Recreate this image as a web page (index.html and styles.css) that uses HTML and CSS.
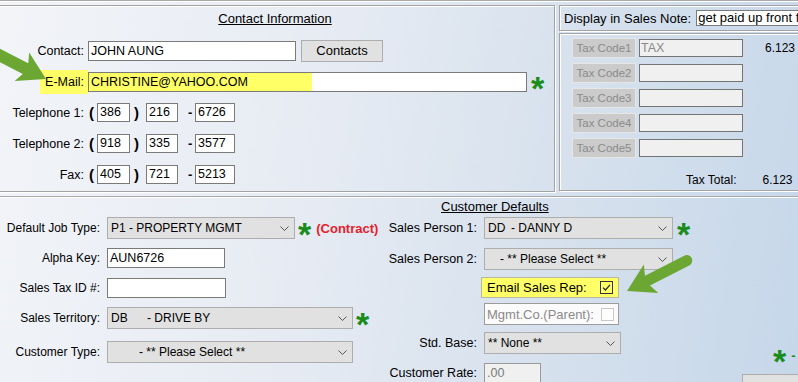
FILE: index.html
```html
<!DOCTYPE html>
<html lang="en">
<head>
<meta charset="utf-8">
<title>Customer</title>
<link rel="stylesheet" href="styles.css">
</head>
<body>
<div class="page">
  <div class="topline"></div>
  <div class="top">
    <section class="panel contact">
      <div class="heading"><span class="u">Contact Information</span></div>
      <div class="row">
        <span class="lbl">Contact:</span>
        <div class="field f-contact">JOHN AUNG</div>
        <button class="btn btn-contacts">Contacts</button>
      </div>
      <div class="row">
        <span class="lbl"><span class="hl-label">E-Mail:</span></span>
        <div class="field f-email"><span class="hl-text">CHRISTINE@YAHOO.COM</span></div>
        <span class="req req-email">*</span>
      </div>
      <div class="row">
        <span class="lbl">Telephone 1:</span>
        <span class="paren">(</span>
        <div class="field ph f-area">386</div>
        <span class="paren close">)</span>
        <div class="field ph f-pre">216</div>
        <span class="dash">-</span>
        <div class="field ph f-num">6726</div>
      </div>
      <div class="row">
        <span class="lbl">Telephone 2:</span>
        <span class="paren">(</span>
        <div class="field ph f-area">918</div>
        <span class="paren close">)</span>
        <div class="field ph f-pre">335</div>
        <span class="dash">-</span>
        <div class="field ph f-num">3577</div>
      </div>
      <div class="row">
        <span class="lbl">Fax:</span>
        <span class="paren">(</span>
        <div class="field ph f-area">405</div>
        <span class="paren close">)</span>
        <div class="field ph f-pre">721</div>
        <span class="dash">-</span>
        <div class="field ph f-num">5213</div>
      </div>
    </section>
    <div class="rightcol">
      <div class="panel note">
        <span>Display in Sales Note:</span>
        <div class="field note-field">get paid up front first</div>
      </div>
      <div class="panel tax">
        <div class="taxrow"><span class="taxbtn">Tax Code1</span><div class="taxin">TAX</div><span class="taxval">6.123</span></div>
        <div class="taxrow"><span class="taxbtn">Tax Code2</span><div class="taxin"></div></div>
        <div class="taxrow"><span class="taxbtn">Tax Code3</span><div class="taxin"></div></div>
        <div class="taxrow"><span class="taxbtn">Tax Code4</span><div class="taxin"></div></div>
        <div class="taxrow"><span class="taxbtn">Tax Code5</span><div class="taxin"></div></div>
        <div class="taxtotal"><span>Tax Total:</span><span class="taxtotal-val">6.123</span></div>
      </div>
    </div>
  </div>

  <div class="bottom">
    <div class="col-left">
      <div class="brow r-job">
        <span class="blbl">Default Job Type:</span>
        <div class="select sel-job"><span>P1 - PROPERTY MGMT</span><svg class="chev" width="9" height="5" viewBox="0 0 9 5"><polyline points="0.5,0.5 4.5,4.5 8.5,0.5" fill="none" stroke="#555" stroke-width="1"/></svg></div>
        <span class="req req-job">*</span>
        <span class="contract">(Contract)</span>
      </div>
      <div class="brow r-alpha">
        <span class="blbl">Alpha Key:</span>
        <div class="field f-alpha">AUN6726</div>
      </div>
      <div class="brow r-taxid">
        <span class="blbl">Sales Tax ID #:</span>
        <div class="field f-taxid"></div>
      </div>
      <div class="brow r-terr">
        <span class="blbl">Sales Territory:</span>
        <div class="select sel-wide"><span><span class="code">DB</span>- DRIVE BY</span><svg class="chev" width="9" height="5" viewBox="0 0 9 5"><polyline points="0.5,0.5 4.5,4.5 8.5,0.5" fill="none" stroke="#555" stroke-width="1"/></svg></div>
        <span class="req req-terr">*</span>
      </div>
      <div class="brow r-ctype">
        <span class="blbl">Customer Type:</span>
        <div class="select sel-wide sel-indent"><span>- ** Please Select **</span><svg class="chev" width="9" height="5" viewBox="0 0 9 5"><polyline points="0.5,0.5 4.5,4.5 8.5,0.5" fill="none" stroke="#555" stroke-width="1"/></svg></div>
      </div>
    </div>

    <div class="col-right">
      <div class="cd-heading"><span class="u">Customer Defaults</span></div>
      <div class="brow r-sp1">
        <span class="rlbl">Sales Person 1:</span>
        <div class="select sel-sp"><span><span class="code2">DD</span>- DANNY D</span><svg class="chev" width="9" height="5" viewBox="0 0 9 5"><polyline points="0.5,0.5 4.5,4.5 8.5,0.5" fill="none" stroke="#555" stroke-width="1"/></svg></div>
        <span class="req req-sp">*</span>
      </div>
      <div class="brow r-sp2">
        <span class="rlbl">Sales Person 2:</span>
        <div class="select sel-sp sel-indent2"><span>- ** Please Select **</span><svg class="chev" width="9" height="5" viewBox="0 0 9 5"><polyline points="0.5,0.5 4.5,4.5 8.5,0.5" fill="none" stroke="#555" stroke-width="1"/></svg></div>
      </div>
      <div class="brow r-email">
        <span class="rlbl"></span>
        <div class="chkbox emailrep">
          <span>Email Sales Rep:</span>
          <span class="cb cb-on"><svg width="11" height="11" viewBox="0 0 11 11"><path d="M2 5.6 L4.4 8 L9 2.8" fill="none" stroke="#222" stroke-width="1.2"/></svg></span>
        </div>
      </div>
      <div class="brow r-mgmt">
        <span class="rlbl"></span>
        <div class="chkbox mgmt">
          <span>Mgmt.Co.(Parent):</span>
          <span class="cb cb-off"></span>
        </div>
      </div>
      <div class="brow r-std">
        <span class="rlbl">Std. Base:</span>
        <div class="select sel-std"><span>** None **</span><svg class="chev" width="9" height="5" viewBox="0 0 9 5"><polyline points="0.5,0.5 4.5,4.5 8.5,0.5" fill="none" stroke="#555" stroke-width="1"/></svg></div>
      </div>
      <div class="brow r-rate">
        <span class="rlbl">Customer Rate:</span>
        <div class="field f-rate">.00</div>
      </div>
    </div>

    <div class="col-extra">
      <div class="legend"><span class="req">*</span><span class="legend-dash">-</span></div>
      <button class="btn btn-save">Save</button>
    </div>
  </div>

  <svg class="overlay" width="798" height="382" viewBox="0 0 798 382">
    <g transform="translate(46,79) rotate(27)" fill="#6ca733">
      <path d="M0 0 L-27 -16 L-23 -6 L-100 -6 L-100 6 L-23 6 L-27 16 Z"/>
    </g>
    <g transform="translate(627,291) rotate(153)" fill="#6ca733">
      <path d="M0 0 L-27 -16 L-23 -5.5 L-67 -5.5 A5.5 5.5 0 0 0 -67 5.5 L-23 5.5 L-27 16 Z"/>
    </g>
  </svg>
</div>
</body>
</html>
```

FILE: styles.css
```css
* { box-sizing: border-box; }
html, body { margin: 0; padding: 0; }
body {
  width: 798px;
  height: 382px;
  overflow: hidden;
  font-family: "Liberation Sans", Arial, sans-serif;
  font-size: 12px;
  color: #000;
  background: linear-gradient(100deg, #f2f4f8 0%, #e6ebf3 40%, #d3dfec 75%, #c6d7ea 100%);
}
.page {
  position: relative;
  width: 798px;
  height: 382px;
  overflow: hidden;
}
.u { text-decoration: underline; }

.topline {
  height: 2px;
  border-top: 1px solid #a9a9a9;
  border-bottom: 1px solid #ffffff;
}
.top {
  display: flex;
  gap: 4px;
  padding-top: 3px;
  height: 190px;
}
.panel {
  border: 1px solid #a3a3a3;
  box-shadow: inset 1px 1px 0 #ffffff, 1px 1px 0 #ffffff;
}
.contact {
  width: 557px;
  height: 187px;
  margin-left: -2px;
  flex: none;
}
.heading {
  height: 29px;
  padding-top: 5px;
  line-height: 15px;
  text-align: center;
  font-size: 13px;
  padding-right: 3px;
}
.row {
  display: flex;
  align-items: center;
  height: 31px;
}
.lbl {
  width: 89px;
  flex: none;
  text-align: right;
  padding-right: 4px;
  font-size: 12.5px;
  white-space: nowrap;
}
.field {
  background: #ffffff;
  border: 1px solid #7a7a7a;
  font-size: 12.5px;
  line-height: 18px;
  height: 20px;
  padding-left: 2px;
  white-space: nowrap;
  overflow: hidden;
  flex: none;
}
.f-contact { width: 208px; }
.btn {
  font-family: "Liberation Sans", Arial, sans-serif;
  font-size: 13px;
  background: #e1e1e1;
  border: 1px solid #adadad;
  color: #000;
  padding: 0;
  flex: none;
}
.btn-contacts {
  width: 82px;
  height: 22px;
  margin-left: 5px;
}
.hl-label {
  display: inline-block;
  background: #ffff66;
  height: 24px;
  line-height: 24px;
  padding: 0 4px 0 5px;
  margin-right: -4px;
}
.f-email {
  width: 439px;
  padding-left: 0;
  padding-top: 0;
}
.hl-text {
  display: inline-block;
  width: 223px;
  height: 18px;
  background: #ffff66;
  padding-left: 2px;
}
.req {
  display: inline-block;
  flex: none;
  color: #1a8c1a;
  font-weight: bold;
  font-size: 34px;
  line-height: 22px;
  height: 22px;
  padding-top: 6px;
  overflow: visible;
}
.req-email { margin-left: 4px; }

.paren {
  font-weight: bold;
  font-size: 15px;
  margin-left: 1px;
  width: 5px;
  flex: none;
}
.paren.close { margin-left: 4px; }
.ph {
  height: 19px;
  line-height: 17px;
}
.f-area { width: 33px; margin-left: 3px; }
.f-pre { width: 32px; margin-left: 7px; }
.dash {
  font-weight: bold;
  font-size: 13px;
  margin-left: 10px;
  width: 5px;
  flex: none;
}
.f-num { width: 40px; margin-left: 2px; }

.rightcol {
  width: 262px;
  flex: none;
  display: flex;
  flex-direction: column;
  gap: 2px;
}
.note {
  height: 26px;
  display: flex;
  align-items: center;
  padding-left: 4px;
  font-size: 13px;
  white-space: nowrap;
}
.note-field {
  margin-left: 5px;
  width: 200px;
  height: 16px;
  line-height: 14px;
  font-size: 13px;
  padding-left: 1px;
}
.tax {
  height: 158px;
  padding: 4px 0 0 12px;
}
.taxrow {
  display: flex;
  align-items: center;
  height: 25px;
  padding-bottom: 5px;
}
.taxbtn {
  width: 64px;
  height: 20px;
  background: #cbcbcb;
  border: 1px solid #e6e6e6;
  color: #8a8a8a;
  font-size: 11.5px;
  line-height: 18px;
  text-align: center;
  flex: none;
}
.taxin {
  width: 104px;
  height: 18px;
  margin-left: 3px;
  background: #f0f0f0;
  border: 1px solid #747474;
  color: #8a8a8a;
  font-size: 12.5px;
  line-height: 16px;
  padding-left: 1px;
  flex: none;
}
.taxval {
  margin-left: 22px;
  font-size: 12px;
}
.taxtotal {
  display: flex;
  align-items: center;
  height: 20px;
  margin-top: 7px;
  padding-left: 114px;
  font-size: 12px;
}
.taxtotal-val { margin-left: 26px; }

.bottom {
  margin-top: 4px;
  border-top: 1px solid #a9a9a9;
  box-shadow: inset 0 1px 0 #ffffff;
  display: grid;
  grid-template-columns: 380px 300px 118px;
  height: 186px;
}
.col-left { padding-top: 20px; }
.cd-heading {
  height: 20px;
  line-height: 20px;
  font-size: 13px;
  padding-left: 61px;
}
.brow {
  display: flex;
  align-items: center;
  height: 22px;
}
.blbl {
  width: 107px;
  flex: none;
  text-align: right;
  padding-right: 7px;
  font-size: 12px;
  white-space: nowrap;
}
.rlbl {
  width: 104px;
  flex: none;
  text-align: right;
  padding-right: 7px;
  font-size: 12.5px;
  white-space: nowrap;
}
.select {
  display: flex;
  align-items: center;
  justify-content: space-between;
  height: 22px;
  background: #e1e1e1;
  border: 1px solid #adadad;
  padding: 0 5px 0 3px;
  font-size: 12px;
  white-space: nowrap;
  flex: none;
}
.chev { flex: none; }
.sel-job { width: 188px; }
.sel-wide { width: 246px; }
.sel-indent { padding-left: 31px; }
.sel-sp { width: 189px; }
.sel-indent2 { padding-left: 15px; }
.sel-std { width: 137px; }
.code { display: inline-block; width: 36px; }
.code2 { display: inline-block; width: 23px; }

.req-job { margin-left: 3px; }
.req-terr { margin-left: 3px; }
.req-sp { margin-left: 4px; }
.contract {
  color: #e8202a;
  font-weight: bold;
  font-size: 13px;
  margin-left: 5px;
}

.r-job { margin-bottom: 9px; }
.r-alpha { height: 20px; margin-bottom: 10px; }
.f-alpha { width: 118px; }
.r-taxid { height: 20px; margin-bottom: 9px; }
.f-taxid { width: 119px; }
.r-terr { margin-bottom: 12px; }

.r-sp1 { margin-bottom: 9px; }
.r-sp2 { margin-bottom: 7px; }
.r-email { height: 21px; margin-bottom: 5px; }
.r-mgmt { margin-bottom: 7px; }
.r-std { margin-bottom: 9px; }
.r-rate { height: 20px; }

.chkbox {
  display: flex;
  align-items: center;
  justify-content: space-between;
  font-size: 13px;
  flex: none;
}
.emailrep {
  width: 138px;
  height: 21px;
  margin-left: -3px;
  background: #ffff66;
  border: 1px solid #b8b8a0;
  padding: 0 5px 0 5px;
}
.mgmt {
  width: 135px;
  height: 22px;
  background: #fbfbfb;
  border: 1px solid #9c9c9c;
  padding: 0 4px 0 2px;
  color: #8a8a8a;
}
.cb {
  width: 13px;
  height: 13px;
  display: flex;
  align-items: center;
  justify-content: center;
  flex: none;
}
.cb-on { border: 1px solid #333333; }
.cb-off { border: 1px solid #c8c8c8; background: #ffffff; }
.f-rate {
  width: 57px;
  background: #f0f0f0;
  border-color: #9a9a9a;
  color: #7a7a7a;
}

.col-extra {
  padding-top: 147px;
}
.legend {
  display: flex;
  align-items: center;
  height: 22px;
  padding-left: 93px;
}
.legend-dash {
  color: #1a8c1a;
  font-weight: bold;
  font-size: 13px;
  margin-left: 5px;
}
.btn-save {
  display: block;
  width: 80px;
  height: 24px;
  margin: 8px 0 0 62px;
  padding-top: 4px;
  text-align: left;
  padding-left: 18px;
}

.overlay {
  position: absolute;
  left: 0;
  top: 0;
  pointer-events: none;
}
```
